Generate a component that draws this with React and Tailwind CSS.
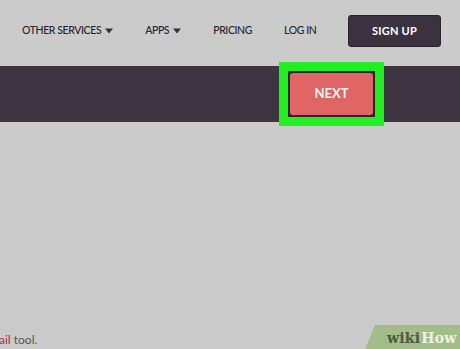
const navLinks = [
    { label: "OTHER SERVICES", caret: true },
    { label: "APPS", caret: true },
    { label: "PRICING" },
    { label: "LOG IN" },
];

const Caret = () => (
    <svg width="8" height="6" viewBox="0 0 8 6" className="ml-[4px] fill-[#333]">
        <path d="M0 0.5 L8 0.5 L4 5.5 Z" />
    </svg>
);

export default function App() {
    return (
        <div className="w-[460px] h-[349px] bg-[#cbcbcb] overflow-hidden flex flex-col font-['Lato',sans-serif]">
            {/* Top nav */}
            <div className="h-[66px] flex items-center pl-[22px] pr-[19px] pb-[4px]">
                <div className="flex items-center gap-[32px] text-[10.5px] font-medium tracking-[-0.4px] text-[#2a2529]">
                    {navLinks.map((l) => (
                        <div key={l.label} className="flex items-center">
                            {l.label}
                            {l.caret && <Caret />}
                        </div>
                    ))}
                </div>
                <button className="ml-auto w-[93px] h-[32px] rounded-[3px] bg-[#3b3240] border border-[#2a232d] text-white text-[11px] font-bold tracking-[0.2px]">
                    SIGN UP
                </button>
            </div>

            {/* Dark bar with highlighted button */}
            <div className="h-[56px] bg-[#3e3542] flex items-center justify-end pr-[76px]">
                <div className="border-[9px] border-[#22ee22] bg-[#2d262f] p-[2px] -my-[4px]">
                    <div className="w-[83px] h-[42px] rounded-[3px] bg-[#e06565] flex items-center justify-center text-[#fff4f0] text-[13px] font-bold">
                        NEXT
                    </div>
                </div>
            </div>

            {/* Body */}
            <div className="flex-1 flex items-end justify-between">
                <div className="text-[12px] text-[#555] -ml-[1px]">
                    <span className="text-[#a3334a]">ail</span> tool.
                </div>
                <div className="relative h-[24px] w-[95px]">
                    <div className="absolute inset-0 bg-[#a3bd8a] [clip-path:polygon(10px_0,100%_0,100%_100%,0_100%)]" />
                    <div className="relative h-full flex items-center pl-[22px] pt-[2px] font-['DejaVu_Serif',serif] font-bold text-[14px] tracking-[0.2px]">
                        <span className="text-[#4b5a3e]">wiki</span>
                        <span className="text-[#eef2e6] ml-[1px]">How</span>
                    </div>
                </div>
            </div>
        </div>
    );
}
